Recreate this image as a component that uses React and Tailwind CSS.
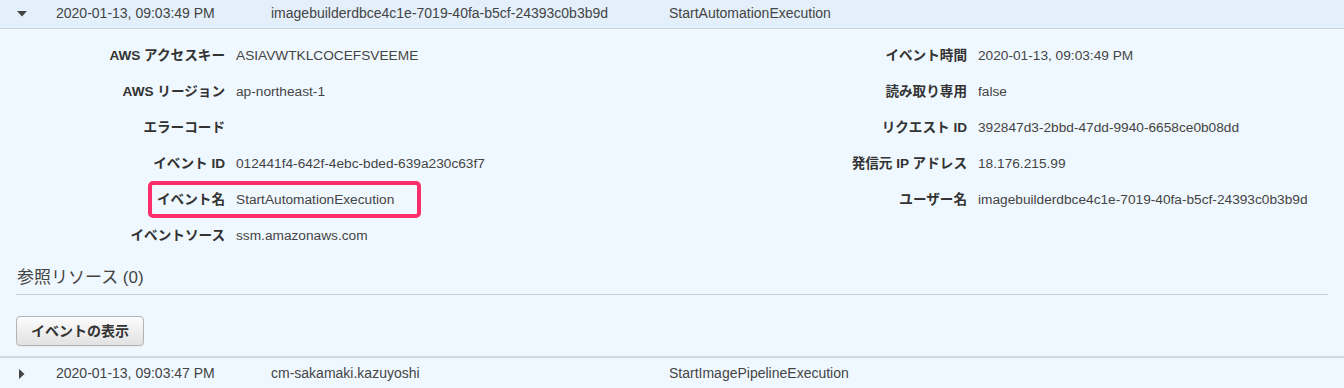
import React from "react";

const FONT = { fontFamily: '"Liberation Sans", "Noto Sans CJK JP", Arial, sans-serif' };

const left = [
  ["AWS アクセスキー", "ASIAVWTKLCOCEFSVEEME"],
  ["AWS リージョン", "ap-northeast-1"],
  ["エラーコード", ""],
  ["イベント ID", "012441f4-642f-4ebc-bded-639a230c63f7"],
  ["イベント名", "StartAutomationExecution", true],
  ["イベントソース", "ssm.amazonaws.com"],
];

const right = [
  ["イベント時間", "2020-01-13, 09:03:49 PM"],
  ["読み取り専用", "false"],
  ["リクエスト ID", "392847d3-2bbd-47dd-9940-6658ce0b08dd"],
  ["発信元 IP アドレス", "18.176.215.99"],
  ["ユーザー名", "imagebuilderdbce4c1e-7019-40fa-b5cf-24393c0b3b9d"],
];

function Row({ label, value, highlight, labelW }) {
  return (
    <div className="relative flex h-9 items-center">
      <div
        className="shrink-0 text-right font-bold text-[13.6px] text-[#333] whitespace-nowrap"
        style={{ width: labelW }}
      >
        {label}
      </div>
      <div className="pl-[11px] text-[13.7px] text-[#444] whitespace-nowrap">{value}</div>
      {highlight && (
        <div className="absolute left-[148px] top-[-1px] h-[37px] w-[273px] rounded-[5px] border-4 border-[#fd2e6c]" />
      )}
    </div>
  );
}

export default function App() {
  return (
    <div className="w-[1344px] h-[388px] overflow-hidden bg-[#f0f8ff]" style={FONT}>
      {/* header row */}
      <div className="flex h-[29px] items-center border-b border-[#cdd3d8] bg-[#e3effb] pb-[1px] text-[14px] text-[#444]">
        <div className="w-[56px] pl-[17px]">
          <svg width="10" height="6" viewBox="0 0 10 6" className="mt-[1px]">
            <path d="M0 0 L10 0 L5 5.5 Z" fill="#444" />
          </svg>
        </div>
        <div className="w-[215px]">2020-01-13, 09:03:49 PM</div>
        <div className="w-[398px]">imagebuilderdbce4c1e-7019-40fa-b5cf-24393c0b3b9d</div>
        <div>StartAutomationExecution</div>
      </div>

      {/* detail panel */}
      <div className="border-b-2 border-[#d3d7da] bg-[#f0f8ff] pt-[9px] pb-[10px]">
        <div className="flex">
          <div className="w-[672px]">
            {left.map(([l, v, h]) => (
              <Row key={l} label={l} value={v} highlight={h} labelW={225} />
            ))}
          </div>
          <div className="w-[672px]">
            {right.map(([l, v]) => (
              <Row key={l} label={l} value={v} labelW={295} />
            ))}
          </div>
        </div>
        <div className="mx-4 mt-[13px] border-b border-[#c9ced2] pb-[6px]">
          <div className="pl-[1px] text-[17px] leading-[21px] text-[#444]">参照リソース (0)</div>
        </div>
        <div className="px-4 pt-[21px]">
          <button className="h-[30px] w-[128px] rounded-[4px] border border-[#b4b4b4] bg-gradient-to-b from-[#fcfcfc] to-[#e2e2e2] text-[14px] font-bold text-[#333] shadow-[0_1px_0_rgba(0,0,0,0.05)]">
            イベントの表示
          </button>
        </div>
      </div>

      {/* collapsed row */}
      <div className="flex h-[31px] items-center bg-[#f0f8ff] text-[14px] text-[#444]">
        <div className="w-[56px] pl-[19px]">
          <svg width="6" height="10" viewBox="0 0 6 10" className="mt-[1px]">
            <path d="M0 0 L5.5 5 L0 10 Z" fill="#444" />
          </svg>
        </div>
        <div className="w-[215px]">2020-01-13, 09:03:47 PM</div>
        <div className="w-[398px]">cm-sakamaki.kazuyoshi</div>
        <div>StartImagePipelineExecution</div>
      </div>
    </div>
  );
}
